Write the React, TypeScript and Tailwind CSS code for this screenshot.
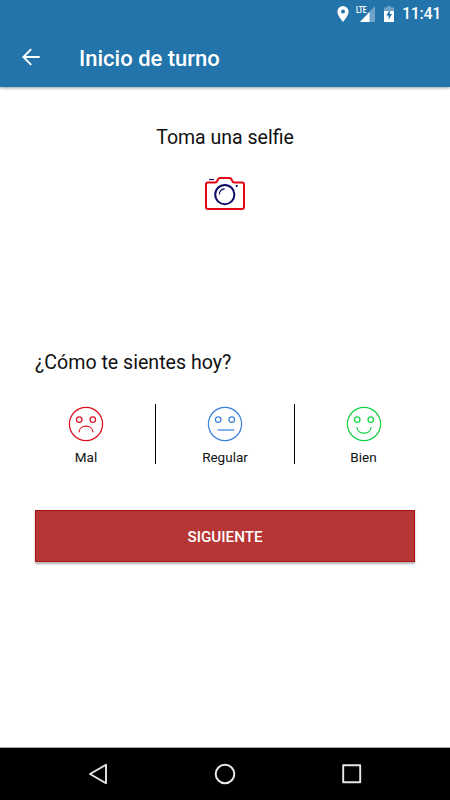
import type { ReactNode } from "react";

interface Mood {
  label: string;
  color: string;
  mouth: ReactNode;
}

const MOODS: Mood[] = [
  { label: "Mal", color: "text-[#dc1020]", mouth: <path d="M11 26.2c.4-8 13.6-8 14 0" /> },
  { label: "Regular", color: "text-[#3a82dc]", mouth: <path d="M10.5 24h17" /> },
  { label: "Bien", color: "text-[#14d344]", mouth: <path d="M11 21.2c.4 8 13.6 8 14 0" /> },
];

function StatusBar() {
  return (
    <div className="flex h-7 items-center justify-end pr-[9px] text-white">
      <svg className="mr-[7px] h-4 w-3" viewBox="0 0 12 16" fill="currentColor">
        <path
          fillRule="evenodd"
          d="M6 0a5.6 5.6 0 0 0-5.6 5.6C.4 9.8 6 16 6 16s5.6-6.2 5.6-10.4A5.6 5.6 0 0 0 6 0Zm0 3.6a2 2 0 1 1 0 4 2 2 0 0 1 0-4Z"
        />
      </svg>
      <svg className="mr-[9px] h-4 w-[19px]" viewBox="0 0 19 16" fill="currentColor">
        <path d="M19 0v16H4l7-7.5V7.2h.8L19 0Z" opacity=".35" />
        <path d="M13.5 6v10H4L13.5 6Z" />
        <text x="0" y="6.5" fontSize="8.5" fontWeight="700" textLength="10.5" lengthAdjust="spacingAndGlyphs">
          LTE
        </text>
      </svg>
      <svg className="mr-[8px] h-4 w-[10px]" viewBox="0 0 10 16" fill="currentColor">
        <path d="M3 0h4v1.6h3V6H0V1.6h3V0Z" opacity=".35" />
        <path d="M0 5h10v11H0V5Z" />
        <path d="M5.8 3.8 2.3 9.6h2.3v4.1l3.4-5.6H5.8V3.8Z" fill="#2274ab" />
      </svg>
      <span className="text-base leading-7 font-medium tracking-[-0.3px]">11:41</span>
    </div>
  );
}

function Header() {
  return (
    <header className="z-10 h-[87px] shrink-0 bg-[#2274ab] shadow-[0_1px_3px_rgba(0,0,0,0.4)]">
      <StatusBar />
      <div className="flex h-[59px] items-center pl-[22px] text-white">
        <svg className="-mt-px mr-[39px] h-[18px] w-[18px]" viewBox="0 0 18 18" fill="none" stroke="currentColor" strokeWidth="1.9">
          <path d="M17.7 9H1.5M9.2 1.2 1.4 9l7.8 7.8" />
        </svg>
        <h1 className="pt-[2px] text-[22px] leading-7 font-medium">Inicio de turno</h1>
      </div>
    </header>
  );
}

function CameraIcon() {
  return (
    <svg className="h-[34px] w-10" viewBox="0 0 40 34" fill="none">
      <path
        d="M3 5.5h7.2c1.4 0 1.7-.6 2.3-2l.5-1C13.4 1.5 14 1 15 1h9.5c1 0 1.6.5 2 1.3l.5 1.2c.6 1.4.9 2 2.3 2H37c1.3 0 2 .8 2 2V30c0 1.2-.7 2-2 2H3c-1.3 0-2-.8-2-2V7.5c0-1.2.7-2 2-2Z"
        stroke="#e30613"
        strokeWidth="2"
      />
      <circle cx="19.8" cy="17.6" r="9.6" stroke="#0c0c66" strokeWidth="2" />
      <path d="M14.3 17.6c.1-3.200 2.200-5.500 5.400-5.700" stroke="#0c0c66" strokeWidth="1.1" />
      <path d="M4.2 2.5H9" stroke="#0c0c66" strokeWidth="1.2" />
      <circle cx="31.7" cy="8.9" r="1.1" fill="#0c0c66" />
    </svg>
  );
}

function MoodOption({ label, color, mouth }: Mood) {
  return (
    <button type="button" className="flex h-[60px] flex-col items-center pt-[2px]">
      <svg className={`h-9 w-9 shrink-0 ${color}`} viewBox="0 0 36 36" fill="none" stroke="currentColor" strokeWidth="1.25">
        <circle cx="18" cy="18" r="16.6" />
        <circle cx="11.2" cy="13.6" r="2.8" />
        <circle cx="24.8" cy="13.6" r="2.8" />
        {mouth}
      </svg>
      <span className="mt-[5px] text-[13.5px] leading-5">{label}</span>
    </button>
  );
}

function NavBar() {
  return (
    <nav className="flex h-[53px] shrink-0 items-center justify-between border-t border-[#aaa] bg-black px-[87px] text-[#e8e8e8]">
      <svg className="h-[22px] w-[22px]" viewBox="0 0 22 22" fill="none" stroke="currentColor" strokeWidth="1.9" strokeLinejoin="round">
        <path d="M19 1.8v18.4L3 11 19 1.8Z" />
      </svg>
      <svg className="h-[22px] w-[22px]" viewBox="0 0 22 22" fill="none" stroke="currentColor" strokeWidth="2">
        <circle cx="11" cy="11" r="9.3" />
      </svg>
      <svg className="h-[22px] w-[22px]" viewBox="0 0 22 22" fill="none" stroke="currentColor" strokeWidth="1.9" strokeLinejoin="round">
        <path d="M2.2 2.2h17v17h-17Z" />
      </svg>
    </nav>
  );
}

export default function App() {
  return (
    <div className="flex h-[800px] w-[450px] flex-col overflow-hidden bg-white font-['Roboto',sans-serif] text-[#111]">
      <Header />
      <main className="flex flex-1 flex-col px-[35px]">
        <section className="flex flex-col items-center pt-[37px]">
          <h2 className="text-[19.5px] leading-7">Toma una selfie</h2>
          <button type="button" className="mt-[25px]" aria-label="Tomar selfie">
            <CameraIcon />
          </button>
        </section>

        <section className="mt-[138px]">
          <h2 className="text-[19.6px] leading-7">¿Cómo te sientes hoy?</h2>
          <div className="mt-[27px] -mr-[18px] -ml-[18px] grid grid-cols-[139px_139px_137px] divide-x divide-black">
            {MOODS.map((mood) => (
              <MoodOption key={mood.label} {...mood} />
            ))}
          </div>
        </section>

        <button
          type="button"
          className="mt-[46px] h-[52px] border border-[#a80f14] border-b-[#b01c20] bg-[#b63636] pt-[2px] text-[15.2px] font-medium text-white shadow-[0_2px_2px_rgba(0,0,0,0.3)]"
        >
          SIGUIENTE
        </button>
      </main>
      <NavBar />
    </div>
  );
}
